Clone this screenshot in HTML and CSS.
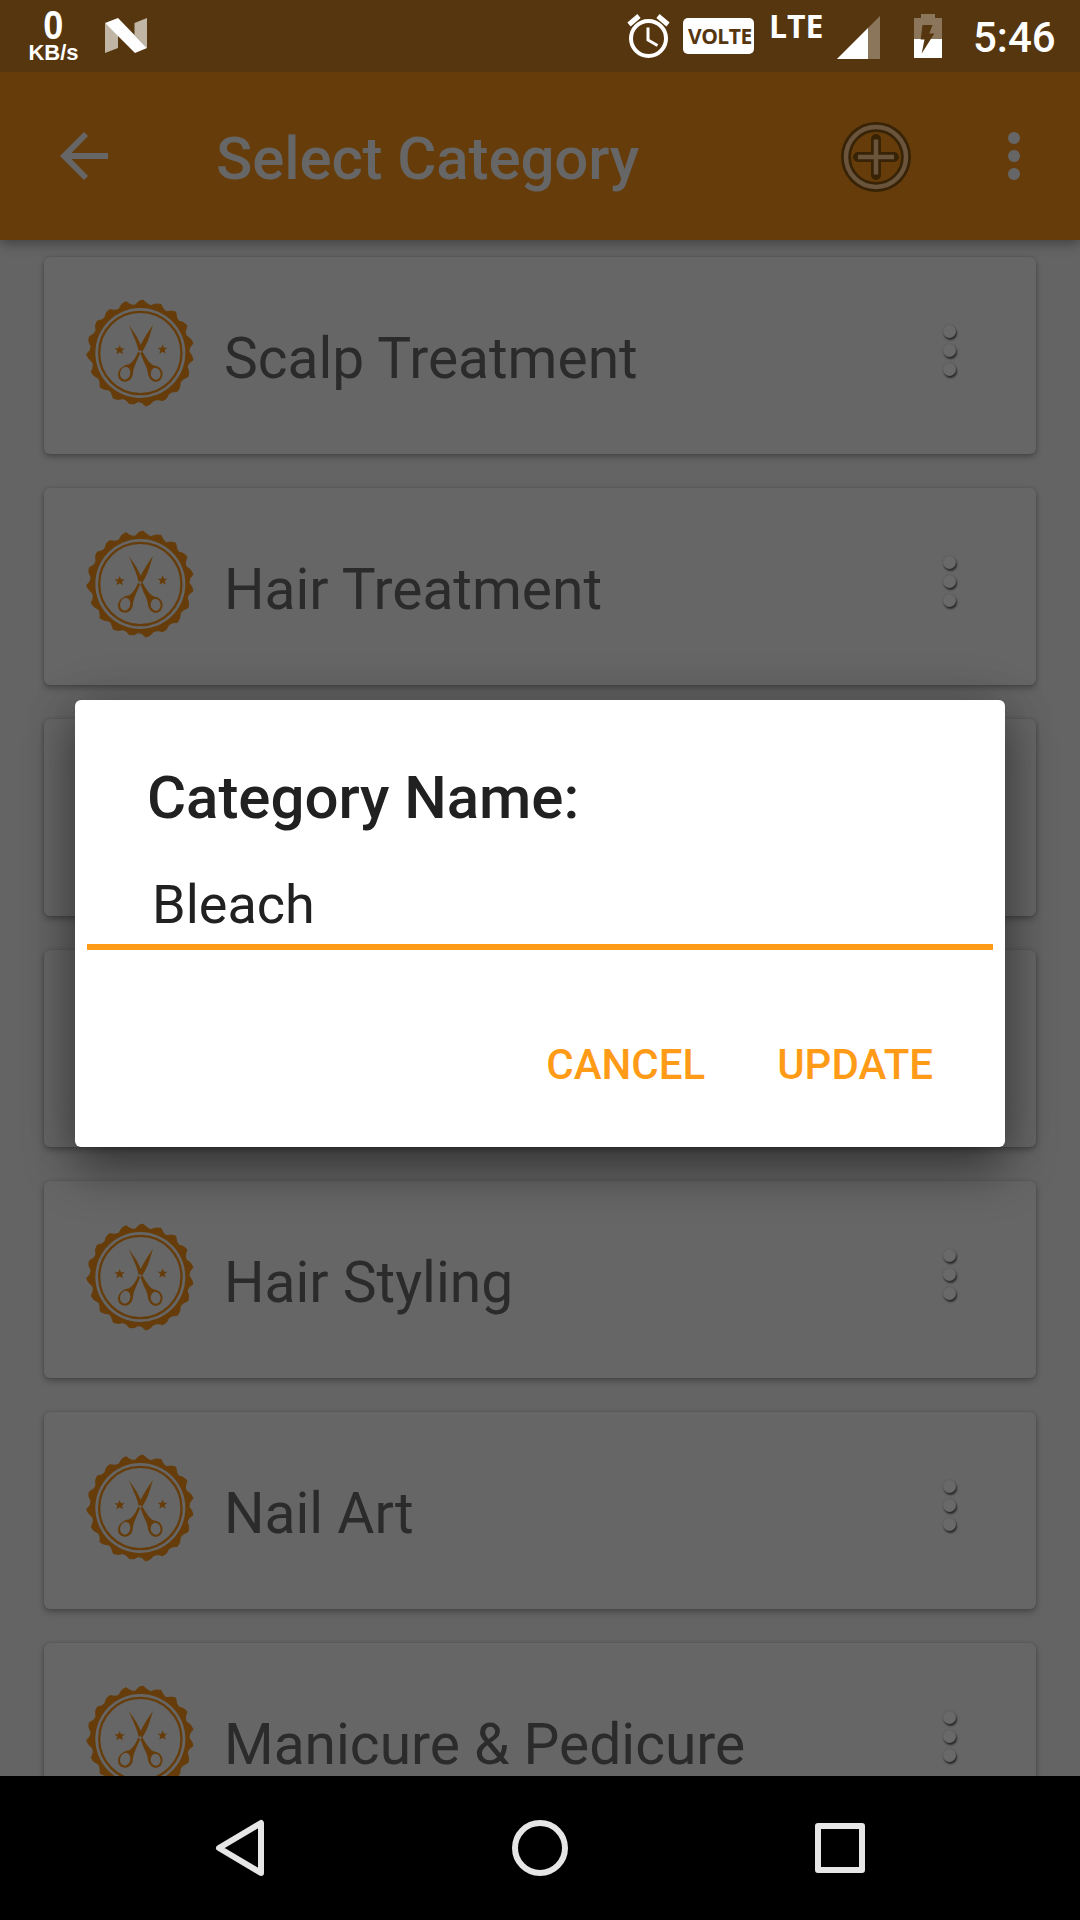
FILE: index.html
```html
<!DOCTYPE html>
<html lang="en">
<head>
<meta charset="utf-8">
<title>Select Category</title>
<link rel="stylesheet" href="styles.css">
</head>
<body>
<svg class="defs" aria-hidden="true">
  <symbol id="badge" viewBox="0 0 420 420">
    <path class="badge-edge" d="M219 45Q232 58 242 62Q257 54 273 58Q279 75 289 80Q304 76 317 81Q319 101 326 108Q342 110 351 122Q343 142 349 152Q364 160 369 175Q355 189 357 200Q367 211 369 225Q351 237 352 247Q359 262 354 275Q336 282 331 292Q331 310 322 319Q303 319 296 327Q290 344 278 347Q260 341 250 348Q240 361 227 363Q213 348 204 350Q194 359 178 356Q168 341 158 341Q143 346 130 340Q126 321 117 315Q98 314 90 306Q92 286 84 279Q67 272 64 260Q74 241 67 231Q53 220 50 208Q65 194 63 184Q53 167 58 155Q77 147 78 135Q74 118 82 108Q99 106 105 97Q108 78 120 74Q137 78 146 73Q155 53 168 50Q186 64 196 60Q208 45 219 45Z"/>
    <circle class="badge-hole" cx="211" cy="204" r="135"/>
    <circle class="badge-ring" cx="211" cy="204" r="123.500"/>
    <path class="badge-fill" d="M176 119L199 153Q213 177 219 199L207 202Q203 183 196 166ZM249 119L239 152Q230 180 218 197L210 184Q219 164 231 146Z"/>
    <path class="badge-fill" d="M204 201Q194 227 178 238Q161 240 150 252Q140 265 147 281Q157 294 173 289Q189 281 189 262Q190 250 198 233L211 203ZM166 245Q180 246 181 262Q181 281 165 284Q151 283 150 268Q151 249 166 245Z" fill-rule="evenodd"/>
    <path class="badge-fill" d="M211 203L222 232Q233 252 234 268Q239 289 258 291Q276 288 278 268Q276 244 250 241Q238 237 218 201ZM256 248Q271 250 272 269Q269 284 256 284Q242 280 242 265Q244 249 256 248Z" fill-rule="evenodd"/>
    <circle class="badge-pivot" cx="210" cy="199" r="3.500"/>
    <path class="badge-fill" d="M149 180l4 10 11 0-8 7 3 11-10-6-10 6 3-11-8-7 11 0zM278 178l4 10 10 0-8 7 3 11-9-6-10 6 3-11-8-7 11 0z"/>
  </symbol>
</svg>

<div class="screen">
  <header class="status">
    <div class="speed"><span class="speed-value">0</span><span class="speed-unit">KB/s</span></div>
    <svg class="nougat" width="42" height="36" viewBox="0 0 42 36">
      <path class="faded" d="M0 5L13 17V30L0 35ZM29.500 5L42 0V30L29.500 17Z"/>
      <path class="solid" d="M0 5L13 0L42 30L30 35Z"/>
    </svg>
    <svg class="alarm" width="44" height="46" viewBox="0 0 44 46">
      <circle cx="21.500" cy="25.500" r="17.500" fill="none" stroke="#fff" stroke-width="4"/>
      <path d="M21 14.500V27L30.500 32.500" fill="none" stroke="#fff" stroke-width="3"/>
      <path d="M2 11.500L12 3M31 3L41 11.500" stroke="#fff" stroke-width="5"/>
    </svg>
    <span class="volte">VOLTE</span>
    <span class="lte">LTE</span>
    <svg class="signal" width="43" height="43" viewBox="0 0 43 43">
      <path class="dim" d="M43 0V43H0Z"/><path class="solid" d="M31 12V43H0Z"/>
    </svg>
    <svg class="battery" width="28" height="44" viewBox="0 0 28 44">
      <path class="dim" d="M7 0H21V4H28V44H0V4H7Z"/><path class="solid" d="M0 25H28V44H0Z"/>
      <path class="bolt" d="M8.500 11H18.500L15.300 19.500H20.300L7.700 39.500L10.500 25.500H6.700Z"/>
    </svg>
    <span class="clock">5:46</span>
  </header>

  <div class="appbar">
    <svg class="back" width="48" height="48" viewBox="0 0 48 48"><path d="M48 21H11.500L28 4L24 0L0 24L24 48L28 44L11.500 27H48Z"/></svg>
    <h1 class="title">Select Category</h1>
    <svg class="add" width="72" height="72" viewBox="0 0 72 72">
      <g class="add-outline"><circle cx="36" cy="36" r="30"/><path d="M36 18V54M18 36H54"/></g>
      <g class="add-face"><circle cx="36" cy="36" r="30"/><path d="M36 18.500V53.500M18 36H54"/></g>
    </svg>
    <svg class="overflow" width="12" height="48" viewBox="0 0 12 48"><circle cx="6" cy="6" r="6"/><circle cx="6" cy="24" r="6"/><circle cx="6" cy="42" r="6"/></svg>
  </div>

  <main class="list">
    <div class="card"><svg class="badge"><use href="#badge"/></svg><span class="name">Scalp Treatment</span><span class="dots"><i></i><i></i><i></i></span></div>
    <div class="card"><svg class="badge"><use href="#badge"/></svg><span class="name">Hair Treatment</span><span class="dots"><i></i><i></i><i></i></span></div>
    <div class="card"></div>
    <div class="card"></div>
    <div class="card"><svg class="badge"><use href="#badge"/></svg><span class="name">Hair Styling</span><span class="dots"><i></i><i></i><i></i></span></div>
    <div class="card"><svg class="badge"><use href="#badge"/></svg><span class="name">Nail Art</span><span class="dots"><i></i><i></i><i></i></span></div>
    <div class="card"><svg class="badge"><use href="#badge"/></svg><span class="name">Manicure &amp; Pedicure</span><span class="dots"><i></i><i></i><i></i></span></div>
  </main>

  <nav class="navbar">
    <svg width="60" height="60" viewBox="0 0 60 60"><path d="M51 5V55L9 30Z"/></svg>
    <svg width="60" height="60" viewBox="0 0 60 60"><circle cx="30" cy="30" r="25"/></svg>
    <svg width="60" height="60" viewBox="0 0 60 60"><rect x="8" y="8" width="44" height="44"/></svg>
  </nav>

  <section class="dialog">
    <h2 class="dialog-title">Category Name:</h2>
    <div class="field">Bleach</div>
    <div class="actions"><span>CANCEL</span><span>UPDATE</span></div>
  </section>
</div>
</body>
</html>
```

FILE: styles.css
```css
* { box-sizing: border-box; }
body { margin: 0; font-family: Roboto, "Liberation Sans", sans-serif; }
svg { display: block; flex: none; }
.defs { position: absolute; width: 0; height: 0; }
.screen {
  position: relative;
  display: flex;
  flex-direction: column;
  width: 1080px;
  height: 1920px;
  overflow: hidden;
  background: #646464;
}

/* Status bar */
.status {
  position: relative;
  z-index: 1;
  display: flex;
  align-items: flex-start;
  height: 72px;
  flex: none;
  padding-left: 27px;
  background: #56360f;
  color: #fff;
}
.solid { fill: #fff; }
.faded { fill: #c1b5a6; }
.dim { fill: #8b755b; }
.bolt { fill: #56360f; }
.speed {
  display: flex;
  flex-direction: column;
  align-items: center;
  width: 53px;
  padding-top: 7px;
  font-family: "Liberation Sans", Arial, sans-serif;
  font-weight: bold;
}
.speed-value { font-size: 41px; line-height: 37px; transform: scaleX(.88); }
.speed-unit { font-size: 22px; line-height: 18px; }
.nougat { margin: 18px 0 0 25px; }
.alarm { margin: 13px 0 0 480px; }
.volte {
  width: 71px;
  height: 36px;
  margin: 18px 0 0 12px;
  padding-left: 5px;
  border-radius: 5px;
  background: #fff;
  color: #56360f;
  font: 700 21px/36px "Open Sans", sans-serif;
  letter-spacing: -.500px;
}
.lte { width: 66px; margin-left: 15px; font: bold 32px/52px "Open Sans", sans-serif; }
.signal { margin: 16px 0 0 2px; }
.battery { margin: 14px 0 0 34px; }
.clock { margin: 13px 0 0 31px; font-size: 42px; line-height: 50px; font-weight: 500; }

/* App bar */
.appbar {
  position: relative;
  display: flex;
  align-items: center;
  height: 168px;
  flex: none;
  padding-left: 60px;
  background: #663d0a;
  box-shadow: 0 3px 12px rgba(0, 0, 0, .38);
}
.back, .overflow { fill: #666; }
.title {
  width: 622px;
  margin: 6px 0 0;
  padding-left: 108px;
  color: #666;
  font-size: 60px;
  font-weight: 500;
  letter-spacing: -.120px;
  line-height: 70px;
  white-space: nowrap;
}
.add { margin: 1px 0 0 110px; fill: none; }
.add-outline { stroke: #382307; stroke-width: 10px; stroke-linecap: round; }
.add-face { stroke: #6a543c; stroke-width: 4.500px; }
.overflow { margin-left: 96px; }

/* Category cards */
.list {
  display: flex;
  flex-direction: column;
  gap: 34px;
  height: 1536px;
  flex: none;
  padding: 17px 44px 0;
  overflow: hidden;
}
.card {
  display: flex;
  align-items: flex-start;
  height: 197px;
  flex: none;
  padding-left: 26px;
  border-radius: 6px;
  background: #666;
  box-shadow: 0 3px 6px rgba(0, 0, 0, .28), 0 0 3px rgba(0, 0, 0, .15);
}
.badge { width: 140px; height: 140px; margin-top: 28px; }
.badge-edge { fill: #663d0a; stroke: #663d0a; stroke-width: 3px; stroke-linejoin: round; }
.badge-hole { fill: #666; }
.badge-ring { fill: none; stroke: #663d0a; stroke-width: 7px; }
.badge-fill { fill: #663d0a; }
.badge-pivot { fill: #666; }
.name {
  width: 733px;
  flex: none;
  margin: 68px 0 0;
  padding-left: 14px;
  color: #2b2b2b;
  font-size: 56.900px;
  line-height: 67px;
  white-space: nowrap;
}
.dots { display: flex; flex-direction: column; gap: 6px; margin-top: 68px; }
.dots i {
  width: 13px;
  height: 13px;
  border-radius: 50%;
  background: #696969;
  box-shadow: 1px 2px 2px rgba(0, 0, 0, .6), 0 0 2px rgba(0, 0, 0, .2);
}

/* System navigation */
.navbar {
  position: relative;
  z-index: 2;
  display: flex;
  align-items: center;
  justify-content: center;
  gap: 240px;
  height: 144px;
  flex: none;
  background: #000;
}
.navbar svg { fill: none; stroke: #e6e6e6; stroke-width: 6px; stroke-linejoin: round; }

/* Dialog */
.dialog {
  position: absolute;
  z-index: 1;
  top: 700px;
  left: 75px;
  width: 930px;
  height: 447px;
  border-radius: 6px;
  background: #fff;
  box-shadow: 0 22px 50px rgba(0, 0, 0, .42), 0 0 50px rgba(0, 0, 0, .16);
  color: #212121;
}
.dialog-title { margin: 63px 0 0 72px; font-size: 60px; font-weight: 500; letter-spacing: -.050px; line-height: 70px; }
.field {
  height: 85px;
  margin: 32px 12px 0;
  padding: 9px 0 0 65px;
  border-bottom: 6px solid #ff9b17;
  font-size: 54px;
  line-height: 62px;
}
.actions {
  display: flex;
  justify-content: flex-end;
  gap: 72px;
  margin: 90px 72px 0 0;
  color: #ff9b17;
  font-size: 42px;
  font-weight: 500;
  line-height: 50px;
}
```
